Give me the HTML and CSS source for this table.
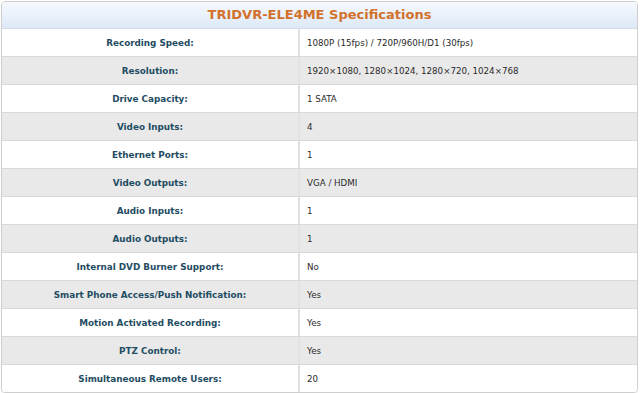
FILE: index.html
```html
<!DOCTYPE html>
<html>
<head>
<meta charset="utf-8">
<link rel="stylesheet" href="styles.css">
</head>
<body>
<div class="specs">
  <div class="head">TRIDVR-ELE4ME Specifications</div>
  <div class="row"><div class="lbl">Recording Speed:</div><div class="val">1080P (15fps) / 720P/960H/D1 (30fps)</div></div>
  <div class="row alt"><div class="lbl">Resolution:</div><div class="val">1920×1080, 1280×1024, 1280×720, 1024×768</div></div>
  <div class="row"><div class="lbl">Drive Capacity:</div><div class="val">1 SATA</div></div>
  <div class="row alt"><div class="lbl">Video Inputs:</div><div class="val">4</div></div>
  <div class="row"><div class="lbl">Ethernet Ports:</div><div class="val">1</div></div>
  <div class="row alt"><div class="lbl">Video Outputs:</div><div class="val">VGA / HDMI</div></div>
  <div class="row"><div class="lbl">Audio Inputs:</div><div class="val">1</div></div>
  <div class="row alt"><div class="lbl">Audio Outputs:</div><div class="val">1</div></div>
  <div class="row"><div class="lbl">Internal DVD Burner Support:</div><div class="val">No</div></div>
  <div class="row alt"><div class="lbl">Smart Phone Access/Push Notification:</div><div class="val">Yes</div></div>
  <div class="row"><div class="lbl">Motion Activated Recording:</div><div class="val">Yes</div></div>
  <div class="row alt"><div class="lbl">PTZ Control:</div><div class="val">Yes</div></div>
  <div class="row last"><div class="lbl">Simultaneous Remote Users:</div><div class="val">20</div></div>
</div>
</body>
</html>
```
FILE: styles.css
```css
html, body {
  margin: 0;
  padding: 0;
  background: #ffffff;
}
body {
  padding: 1px 2px 0 1px;
  font-family: "DejaVu Sans", Verdana, sans-serif;
}
.specs {
  width: 635px;
  border: 1px solid #cfcfcf;
  border-radius: 4px;
  overflow: hidden;
  box-shadow: 0 1px 1px rgba(0,0,0,0.08);
}
.head {
  height: 26px;
  line-height: 26px;
  text-align: center;
  font-weight: bold;
  font-size: 13px;
  color: #d2712c;
  background: linear-gradient(#f6f9fd, #dde9f7);
  border-bottom: 1px solid #d4dce6;
}
.row {
  display: grid;
  grid-template-columns: 298px 1fr;
  height: 27px;
  border-bottom: 1px solid #d9d9d9;
  background: #ffffff;
}
.row.alt {
  background: #e9e9e9;
}
.row.last {
  border-bottom: none;
}
.lbl {
  display: flex;
  align-items: center;
  justify-content: center;
  font-weight: bold;
  font-size: 8.8px;
  color: #1f4d63;
  border-right: 2px solid #e2e2e2;
}
.val {
  display: flex;
  align-items: center;
  padding-left: 7px;
  font-size: 8.7px;
  color: #2a2a2a;
}
```
